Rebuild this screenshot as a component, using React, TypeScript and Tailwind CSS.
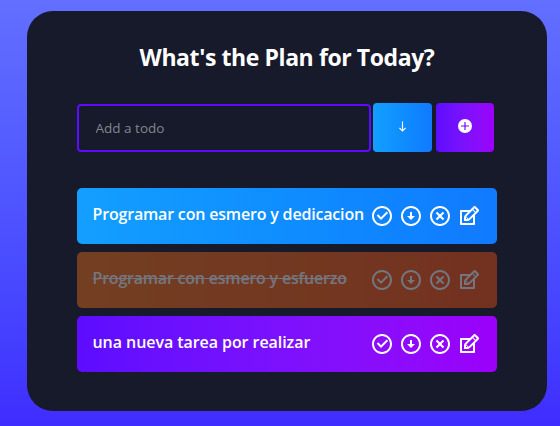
import { RiArrowDownCircleLine, RiCheckboxCircleLine, RiCloseCircleLine } from 'react-icons/ri';
import { TiEdit } from 'react-icons/ti';

type Todo = { text: string; tone: string; tracking: string; done?: boolean };

const todos: Todo[] = [
  { text: 'Programar con esmero y dedicacion', tone: 'from-[#149fff] to-[#117aff]', tracking: 'tracking-[-0.18px]' },
  { text: 'Programar con esmero y esfuerzo', tone: 'from-[#ff7614] to-[#ff5411]', tracking: 'tracking-[-0.21px]', done: true },
  { text: 'una nueva tarea por realizar', tone: 'from-[#5d0cff] to-[#9b00fa]', tracking: 'tracking-[-0.06px]' },
];

function TodoRow({ text, tone, tracking, done }: Todo) {
  return (
    <li
      className={`flex h-14 items-center justify-between rounded-[5px] bg-linear-to-r pr-4 pl-[15.5px] text-white ${tone} ${done ? 'line-through opacity-40' : ''}`}
    >
      <span className={`-mt-1 text-base font-semibold whitespace-nowrap ${tracking}`}>{text}</span>
      <span className="flex gap-[5px] text-2xl">
        <RiCheckboxCircleLine />
        <RiArrowDownCircleLine />
        <RiCloseCircleLine />
        <TiEdit />
      </span>
    </li>
  );
}

export default function App() {
  return (
    <div className="h-[426px] overflow-hidden bg-linear-to-b from-[#626fff] to-[#3f2cff] pt-[11px] pl-[27px] font-['Trebuchet_MS','Open_Sans',sans-serif]">
      <main className="h-[400px] w-[520px] rounded-[26px] bg-[#161a2b] px-[50px] pt-8">
        <h1 className="text-center text-[23px] leading-7 font-bold tracking-[-0.41px] whitespace-nowrap text-white">
          What's the Plan for Today?
        </h1>
        <form className="mt-8 flex h-[49px] items-end">
          <input
            className="h-12 w-[294px] rounded-[4px] border-2 border-[#5d0cff] bg-transparent pl-[16.5px] text-[13.5px] text-white outline-none placeholder:text-[#84868c]"
            placeholder="Add a todo"
          />
          <button type="button" className="ml-[2px] flex h-[49px] w-[59px] items-center justify-center rounded-[4px] bg-linear-to-r from-[#149fff] to-[#117aff] pb-[2px]">
            <svg className="h-[11px] w-[7px]" viewBox="0 0 7 11" fill="none" stroke="white" strokeWidth="1.15">
              <path d="M3.5 .5v9.5M.4 6.8l3.1 3.1 3.1-3.1" />
            </svg>
          </button>
          <button type="button" className="ml-1 flex h-[49px] w-[58px] items-center justify-center rounded-[4px] bg-linear-to-r from-[#5d0cff] to-[#9b00fa] pb-[3px] text-white">
            <svg className="size-[14px]" viewBox="0 0 14 14" fill="none">
              <circle cx="7" cy="7" r="7" fill="white" />
              <path d="M7 3v8M3 7h8" stroke="#7d06fd" strokeWidth="1.2" />
            </svg>
          </button>
        </form>
        <ul className="mt-9 flex flex-col gap-2">
          {todos.map((todo) => (
            <TodoRow key={todo.text} {...todo} />
          ))}
        </ul>
      </main>
    </div>
  );
}
